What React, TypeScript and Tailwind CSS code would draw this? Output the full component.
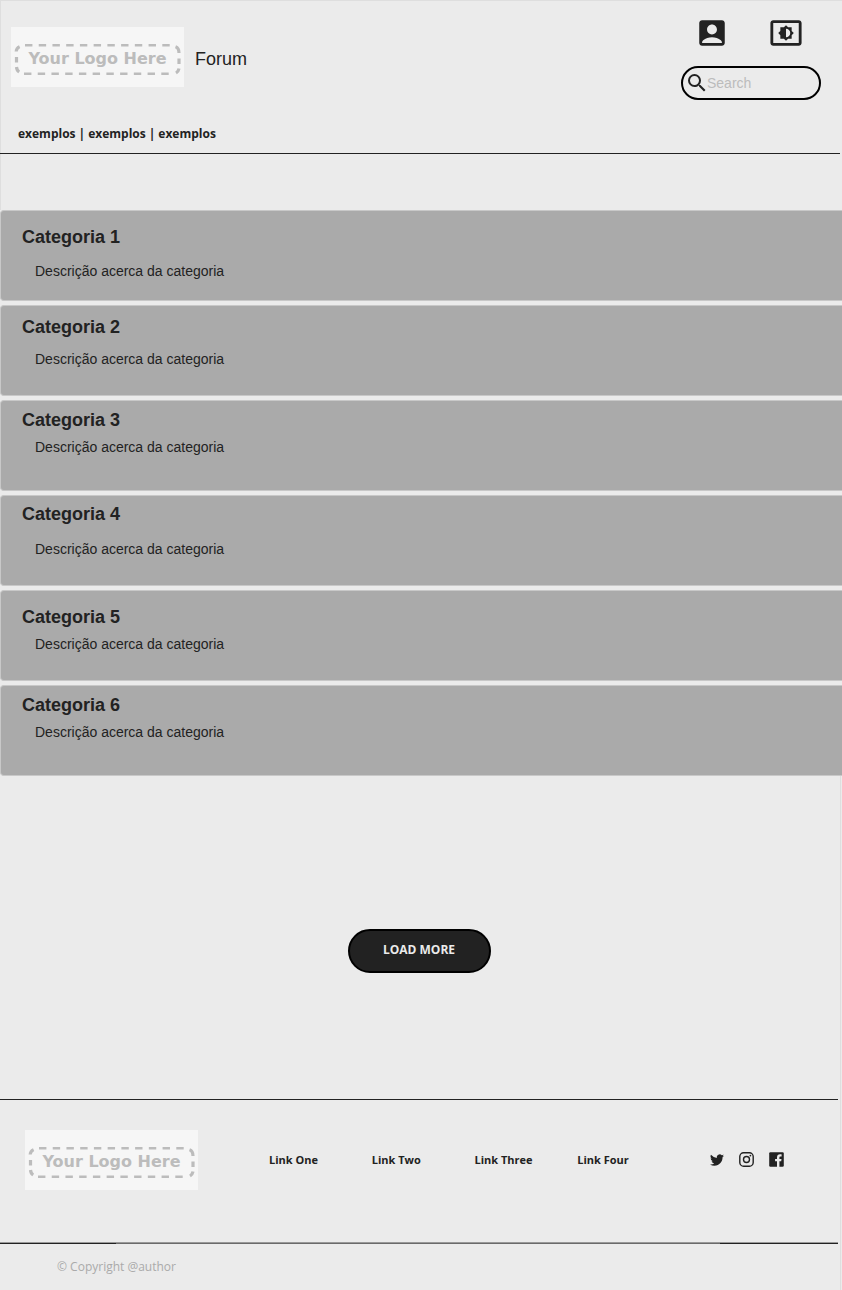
import { MdAccountBox, MdSearch, MdSettingsBrightness } from "react-icons/md";

const categories = [
  { title: "Categoria 1", spacing: "pt-[14px]", gap: "mt-3" },
  { title: "Categoria 2", spacing: "pt-[9px]", gap: "mt-[10px]" },
  { title: "Categoria 3", spacing: "pt-[7px]", gap: "mt-[5px]" },
  { title: "Categoria 4", spacing: "pt-[6px]", gap: "mt-[13px]" },
  { title: "Categoria 5", spacing: "pt-[14px]", gap: "mt-[5px]" },
  { title: "Categoria 6", spacing: "pt-[7px]", gap: "mt-[5px]" },
];

const footerLinks = ["Link One", "Link Two", "Link Three", "Link Four"];

function Logo() {
  return (
    <svg width="173" height="60" viewBox="0 0 173 60" role="img" aria-label="Your Logo Here" className="block shrink-0">
      <rect width="173" height="60" fill="#f6f6f6" />
      <g fill="none" stroke="#bcbcbc" strokeWidth="2.5">
        <path d="M14 18.2H160" strokeDasharray="7.4 6.33" />
        <path d="M13 46.7H159" strokeDasharray="7.4 6.33" />
        <g strokeWidth="3.2">
          <path d="M5.2 24.5Q5.4 21 8.6 19.6M5.5 30V35.5M5.5 40Q5.8 43.5 8.2 45" />
          <path d="M164.5 19.8Q168 21 168 26M168 31.5V37M168 41.5Q167.5 44.5 165 46" />
        </g>
      </g>
      <text x="86.5" y="37" textAnchor="middle" fill="#bcbcbc" fontFamily="DejaVu Sans, sans-serif" fontSize="16" fontWeight="700">
        Your Logo Here
      </text>
    </svg>
  );
}

function Twitter() {
  return (
    <svg width="14" height="14" viewBox="0 0 24 24" fill="currentColor" aria-hidden="true">
      <path d="M24 4.6a10 10 0 0 1-2.8.8 5 5 0 0 0 2.1-2.7c-.9.5-2 1-3.1 1.2a4.9 4.9 0 0 0-8.4 4.5A14 14 0 0 1 1.7 3.2a4.9 4.9 0 0 0 1.5 6.5 4.9 4.9 0 0 1-2.2-.6v.1a4.9 4.9 0 0 0 3.9 4.8 5 5 0 0 1-2.2.1 4.9 4.9 0 0 0 4.6 3.4A9.9 9.9 0 0 1 0 19.5a14 14 0 0 0 7.5 2.2c9.1 0 14-7.5 14-14v-.6A10 10 0 0 0 24 4.6z" />
    </svg>
  );
}

function Instagram() {
  return (
    <svg width="15" height="15" viewBox="0 0 15 15" fill="none" stroke="currentColor" strokeWidth="1.4" aria-hidden="true">
      <rect x=".8" y=".8" width="13.4" height="13.4" rx="3.8" />
      <circle cx="7.5" cy="7.5" r="3" />
      <circle cx="11.4" cy="3.6" r=".9" fill="currentColor" stroke="none" />
    </svg>
  );
}

function Facebook() {
  return (
    <svg width="15" height="15" viewBox="0 0 15 15" aria-hidden="true">
      <rect x=".2" y=".2" width="14.6" height="14.6" rx="1.2" fill="currentColor" />
      <path d="M8 15V9.3H6.1V7H8V5.4C8 3.4 9.2 2.3 11 2.3c.8 0 1.6.1 1.6.1v2h-1c-1 0-1.2.5-1.2 1.2V7h2.1l-.3 2.3h-1.8V15z" fill="#ebebeb" />
    </svg>
  );
}

export default function App() {
  return (
    <div className="min-h-screen bg-[#ebebeb] text-[#222] font-['Liberation_Sans',Arial,sans-serif]">
      <header className="border-t border-l border-[#dedede]">
        <div className="flex items-start justify-between pr-[21px] pl-[10px]">
          <div className="flex items-center gap-[11px] pt-[26px]">
            <Logo />
            <h1 className="pt-1 text-[18px] leading-6">Forum</h1>
          </div>
          <div className="flex flex-col gap-4 pt-[15px]">
            <div className="flex justify-between pr-[18px] pl-[14px]">
              <button type="button" aria-label="Account"><MdAccountBox size={34} /></button>
              <button type="button" aria-label="Brightness"><MdSettingsBrightness size={34} /></button>
            </div>
            <label className="flex h-[34px] w-[140px] items-center rounded-full border-2 border-black pl-[2px]">
              <MdSearch size={24} className="-mr-[2px] shrink-0" />
              <input
                type="search"
                aria-label="Search"
                placeholder="Search"
                className="w-full min-w-0 bg-transparent pr-3 text-[14px] leading-4 outline-none placeholder:text-[#bcbcbc]"
              />
            </label>
          </div>
        </div>
        <nav className="mt-6 mr-[2px] -ml-px flex h-[30px] items-start gap-[3px] border-b border-[#222] pl-[18px] font-['Open_Sans',sans-serif] text-[12px] leading-5 font-bold">
          <a href="#">exemplos</a>
          <span>|</span>
          <a href="#">exemplos</a>
          <span>|</span>
          <a href="#">exemplos</a>
        </nav>
        <div className="h-14" />
      </header>

      <main>
        <section className="flex flex-col gap-1">
          {categories.map((c) => (
            <article key={c.title} className={`h-[91px] rounded-l-[4px] border border-r-0 border-[#c8c8c8] bg-[#aaa] pl-[21px] ${c.spacing}`}>
              <h2 className="text-[18px] leading-6 font-bold">{c.title}</h2>
              <p className={`pl-[13px] text-[14px] leading-5 ${c.gap}`}>Descrição acerca da categoria</p>
            </article>
          ))}
        </section>
        <div className="mr-px flex justify-center border-r border-[#dedede] pt-[153px] pr-[2px] pb-[126px]">
          <button type="button" className="h-11 w-[143px] rounded-full border-2 border-black bg-[#222] pb-[2px] font-['Open_Sans',sans-serif] text-[12px] font-bold text-[#ebebeb]">
            LOAD MORE
          </button>
        </div>
      </main>

      <footer className="mr-px border-r border-[#dedede] pr-[2px] font-['Open_Sans',sans-serif]">
        <div className="flex h-[143px] items-start border-t border-[#222] pt-[30px] pr-[54px] pl-[25px]">
          <Logo />
          <nav className="mt-5 ml-[71px] grid w-[411px] grid-cols-4 text-[11px] leading-5 font-bold">
            {footerLinks.map((link) => (
              <a key={link} href="#">{link}</a>
            ))}
          </nav>
          <div className="mt-[22px] ml-auto flex items-center gap-[15px]">
            <a href="#" aria-label="Twitter"><Twitter /></a>
            <a href="#" aria-label="Instagram"><Instagram /></a>
            <a href="#" aria-label="Facebook"><Facebook /></a>
          </div>
        </div>
        <div className="flex h-[2px] border-t border-[#999]">
          <span className="w-[116px] bg-[#222]" />
          <span className="flex-1 bg-[#6a6a6a]" />
          <span className="w-[118px] bg-[#222]" />
        </div>
        <p className="h-[46px] pt-[13px] pl-[57px] text-[12px] leading-5 text-[#aaa]">© Copyright @author</p>
      </footer>
    </div>
  );
}
